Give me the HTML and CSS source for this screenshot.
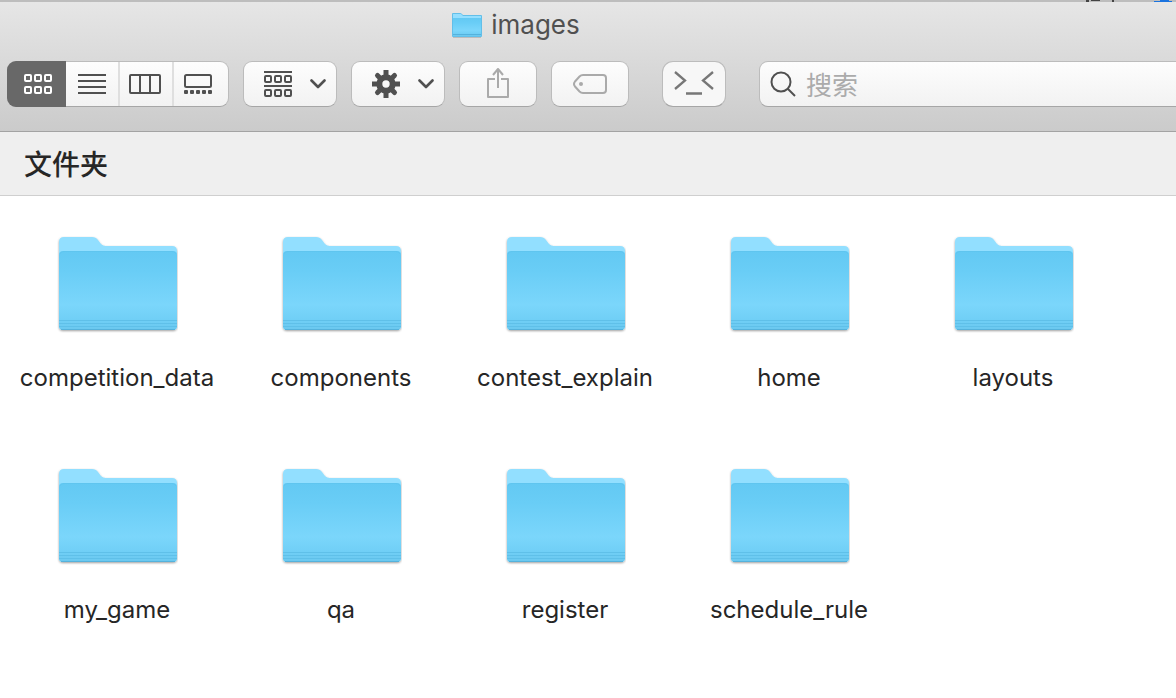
FILE: index.html
```html
<!DOCTYPE html>
<html lang="zh-CN">
<head>
<meta charset="utf-8">
<title>images</title>
<link rel="stylesheet" href="styles.css">
</head>
<body>
<svg class="defs" width="0" height="0" aria-hidden="true">
  <defs>
    <linearGradient id="front" x1="0" y1="0" x2="0" y2="1">
      <stop offset="0" stop-color="#63c9f3"/>
      <stop offset=".25" stop-color="#69cdf6"/>
      <stop offset=".68" stop-color="#7bd6fb"/>
      <stop offset=".87" stop-color="#70cff6"/>
      <stop offset="1" stop-color="#6bc8ef"/>
    </linearGradient>
    <filter id="soft" x="-10%" y="-10%" width="120%" height="130%">
      <feDropShadow dx="0" dy="1" stdDeviation="1" flood-color="#000" flood-opacity=".38"/>
    </filter>
    <symbol id="folder" viewBox="0 0 122 97">
      <g filter="url(#soft)">
        <path fill="#92dfff" d="M3 6Q3 1 8 1H36Q40 1 42 4L45 8Q47 10 50 10H116Q121 10 121 15V90Q121 94 117 94H7Q3 94 3 90Z"/>
      </g>
      <path fill="url(#front)" d="M3 19Q3 15 7 15H117Q121 15 121 19V90Q121 94 117 94H7Q3 94 3 90Z"/>
      <path stroke="#5fc0e9" stroke-width="1" d="M3 84.500H121M3 87.500H121M3 90.500H121"/>
      <path stroke="#55b2dc" stroke-width="1" d="M5 93.500H119"/>
      <path fill="none" stroke="#5abce7" stroke-opacity=".35" d="M4 18Q5 15.500 8 15.500H116Q119 15.500 120 18"/>
    </symbol>
    <symbol id="chevron" viewBox="0 0 16 10">
      <path d="M1.500 1.500L8 8L14.500 1.500" fill="none" stroke="currentColor" stroke-width="2.600" stroke-linecap="round" stroke-linejoin="round"/>
    </symbol>
  </defs>
</svg>

<header class="chrome">
  <svg class="backdrop" viewBox="0 0 110 2" width="110" height="2" aria-hidden="true">
    <path fill="#444" d="M20 0h3v2h-3zM25 0h9v1h-9zM46 0h2v2h-2z"/>
    <path fill="#1a73df" d="M88 1h6V0h9v1h3v1h-18z"/>
  </svg>
  <h1 class="title">
    <svg class="title-icon" viewBox="0 0 32 28" aria-hidden="true">
      <path fill="#62bfe9" d="M1 3Q1 2 2 2H9Q10 2 11 3L12 4H30Q31 4 31 5V25Q31 26 30 26H2Q1 26 1 25Z"/>
      <path fill="#95dfff" d="M2 3H10L12 5H30V8H2Z"/>
      <path fill="url(#front)" d="M2 7H30V25H2Z"/>
      <path stroke="#55b2dc" d="M2 23.500H30"/>
      <path stroke="#999" stroke-opacity=".5" d="M2 26.500H30"/>
    </svg>
    <span>images</span>
  </h1>
  <div class="toolbar">
    <div class="segments" role="group" aria-label="显示方式">
      <button class="segment segment-active" type="button" aria-label="图标" aria-pressed="true">
        <svg width="28" height="22" viewBox="0 0 28 22" fill="none" stroke="currentColor" stroke-width="2">
          <rect x="1" y="2" width="6" height="6" rx="1"/><rect x="11" y="2" width="6" height="6" rx="1"/><rect x="21" y="2" width="6" height="6" rx="1"/>
          <rect x="1" y="14" width="6" height="6" rx="1"/><rect x="11" y="14" width="6" height="6" rx="1"/><rect x="21" y="14" width="6" height="6" rx="1"/>
        </svg>
      </button>
      <button class="segment segment-first" type="button" aria-label="列表">
        <svg width="28" height="20" viewBox="0 0 28 20" stroke="currentColor" stroke-width="2"><path d="M0 1H28M0 7H28M0 13H28M0 19H28"/></svg>
      </button>
      <button class="segment" type="button" aria-label="分栏">
        <svg width="32" height="20" viewBox="0 0 32 20" fill="none" stroke="currentColor" stroke-width="2"><rect x="1" y="1" width="30" height="18" rx="1"/><path d="M11 1V19M21 1V19"/></svg>
      </button>
      <button class="segment segment-last" type="button" aria-label="画廊">
        <svg width="28" height="20" viewBox="0 0 28 20" fill="none" stroke="currentColor" stroke-width="2"><rect x="1" y="1" width="26" height="12" rx="1.500"/><g fill="currentColor" stroke="none"><rect y="16" width="4" height="4" rx="1"/><rect x="6" y="16" width="4" height="4" rx="1"/><rect x="12" y="16" width="4" height="4" rx="1"/><rect x="18" y="16" width="4" height="4" rx="1"/><rect x="24" y="16" width="4" height="4" rx="1"/></g></svg>
      </button>
    </div>
    <button class="tool tool-menu" type="button" aria-label="分组">
      <svg width="28" height="26" viewBox="0 0 28 26" fill="none" stroke="currentColor" stroke-width="2">
        <path d="M0 1H28M0 15H28"/>
        <rect x="1" y="5" width="6" height="6" rx="1"/><rect x="11" y="5" width="6" height="6" rx="1"/><rect x="21" y="5" width="6" height="6" rx="1"/>
        <rect x="1" y="19" width="6" height="6" rx="1"/><rect x="11" y="19" width="6" height="6" rx="1"/><rect x="21" y="19" width="6" height="6" rx="1"/>
      </svg>
      <svg width="16" height="10"><use href="#chevron"/></svg>
    </button>
    <button class="tool tool-menu" type="button" aria-label="操作">
      <svg width="28" height="28" viewBox="-14 -14 28 28">
        <circle r="6.700" fill="none" stroke="currentColor" stroke-width="6"/>
        <g stroke="currentColor" stroke-width="5"><path d="M0 -14V-7M0 14V7M-14 0H-7M14 0H7"/><path stroke-linecap="round" d="M-8.500 -8.500L-5 -5M8.500 -8.500L5 -5M-8.500 8.500L-5 5M8.500 8.500L5 5"/></g>
      </svg>
      <svg width="16" height="10"><use href="#chevron"/></svg>
    </button>
    <button class="tool tool-faint" type="button" aria-label="共享">
      <svg width="22" height="32" viewBox="0 0 22 32" fill="none" stroke="currentColor" stroke-width="2" stroke-linejoin="round"><path d="M8 11H1V29H21V11H14M11 20V1M6 7L11 1L16 7"/></svg>
    </button>
    <button class="tool tool-faint" type="button" aria-label="标签">
      <svg width="34" height="20" viewBox="0 0 34 20" fill="none" stroke="currentColor" stroke-width="2"><path d="M10 1H30Q33 1 33 4V16Q33 19 30 19H10Q8 19 6.500 17.500L2 12.500Q0 10 2 7.500L6.500 2.500Q8 1 10 1Z"/><circle cx="8" cy="10" r="2" fill="currentColor" stroke="none"/></svg>
    </button>
    <button class="tool tool-terminal" type="button" aria-label="终端">
      <svg width="40" height="26" viewBox="0 0 40 26" fill="none" stroke="currentColor" stroke-width="2.300"><path d="M1 1L11 9.500L1 18M39 1L29 9.500L39 18M12 22.500H28"/></svg>
    </button>
    <label class="search">
      <svg width="26" height="26" viewBox="0 0 26 26" fill="none" stroke="currentColor" stroke-width="2"><circle cx="11" cy="11" r="9.500"/><path d="M17.500 17.500L25 25"/></svg>
      <input class="search-input" type="search" placeholder="搜索" aria-label="搜索">
    </label>
  </div>
</header>

<main>
  <h2 class="section-title">文件夹</h2>
  <ul class="folders">
    <li><button class="folder" type="button"><svg class="folder-icon"><use href="#folder"/></svg><span>competition_data</span></button></li>
    <li><button class="folder" type="button"><svg class="folder-icon"><use href="#folder"/></svg><span>components</span></button></li>
    <li><button class="folder" type="button"><svg class="folder-icon"><use href="#folder"/></svg><span>contest_explain</span></button></li>
    <li><button class="folder" type="button"><svg class="folder-icon"><use href="#folder"/></svg><span>home</span></button></li>
    <li><button class="folder" type="button"><svg class="folder-icon"><use href="#folder"/></svg><span>layouts</span></button></li>
    <li><button class="folder" type="button"><svg class="folder-icon"><use href="#folder"/></svg><span>my_game</span></button></li>
    <li><button class="folder" type="button"><svg class="folder-icon"><use href="#folder"/></svg><span>qa</span></button></li>
    <li><button class="folder" type="button"><svg class="folder-icon"><use href="#folder"/></svg><span>register</span></button></li>
    <li><button class="folder" type="button"><svg class="folder-icon"><use href="#folder"/></svg><span>schedule_rule</span></button></li>
  </ul>
</main>
</body>
</html>
```
FILE: styles.css
```css
* {
  box-sizing: border-box;
}

body {
  margin: 0;
  background: #fff;
  color: #262626;
  font-family: Inter, "Noto Sans CJK SC", sans-serif;
  font-size: 24px;
  overflow-x: hidden;
}

button,
input {
  font: inherit;
  color: inherit;
}

svg {
  display: block;
  flex: none;
}

.defs {
  position: absolute;
}

.chrome {
  position: relative;
  padding-bottom: 24px;
  border-top: 2px solid #bdbdbd;
  border-bottom: 1px solid #a3a3a3;
  background: linear-gradient(#e6e6e6, #cbcbcb);
}

.backdrop {
  position: absolute;
  top: -2px;
  right: 0;
}

.title {
  display: flex;
  justify-content: center;
  align-items: center;
  gap: 8px;
  height: 45px;
  margin: 0 145px 14px 0;
  color: #505050;
  font-size: 26px;
  font-weight: 400;
}

.title-icon {
  width: 32px;
  height: 28px;
}

.toolbar {
  display: flex;
  gap: 14px;
  height: 46px;
  margin: 0 -8px 0 7px;
  color: #505050;
}

.segments,
.tool,
.search {
  flex: none;
  border: 1px solid #bcbcbc;
  border-bottom-color: #a6a6a6;
  border-radius: 9px;
  background: linear-gradient(#fdfdfd, #f2f2f2);
}

.segments {
  display: flex;
  width: 222px;
}

.segment {
  display: flex;
  flex: 0 0 54px;
  justify-content: center;
  align-items: center;
  padding: 0 2px 0 0;
  border: 0;
  border-left: 2px solid #dfdfdf;
  background: none;
}

.segment-active {
  flex-basis: 59px;
  margin: -1px 0 -1px -1px;
  padding: 0 0 0 3px;
  border: 0;
  border-radius: 9px 0 0 9px;
  background: #686868;
  color: #fff;
}

.segment-first {
  flex-basis: 52px;
  padding-right: 0;
  border-left: 0;
}

.segment-last {
  flex: 1;
  padding-right: 6px;
}

.tool {
  display: flex;
  justify-content: center;
  align-items: center;
  width: 78px;
  padding: 0;
}

.tool-menu {
  gap: 18px;
  width: 94px;
  padding-left: 10px;
}

.tool-faint {
  color: #aaa;
}

.tool-terminal {
  width: 64px;
  margin: 0 19px;
  border-radius: 11px;
  background: #f7f7f7;
  color: #777;
}

.search {
  display: flex;
  flex: 1;
  align-items: center;
  gap: 10px;
  min-width: 0;
  padding-left: 10px;
}

.search-input {
  flex: 1;
  min-width: 0;
  padding: 3px 0 0;
  border: 0;
  outline: 0;
  background: none;
  font-size: 26px;
  line-height: 32px;
}

.search-input::placeholder {
  color: #ababab;
}

.section-title {
  margin: 0;
  padding: 13px 24px 9px;
  border-bottom: 1px solid #cfcfcf;
  background: #efefef;
  font-size: 28px;
  font-weight: 500;
  line-height: 41px;
}

.folders {
  display: grid;
  grid-template-columns: repeat(auto-fill, 224px);
  row-gap: 75px;
  margin: 0;
  padding: 40px 0 40px 5px;
  list-style: none;
}

.folder {
  display: flex;
  flex-direction: column;
  align-items: center;
  gap: 30px;
  width: 100%;
  padding: 0;
  border: 0;
  background: none;
  line-height: 30px;
}

.folder-icon {
  width: 122px;
  height: 97px;
  overflow: visible;
}
```
